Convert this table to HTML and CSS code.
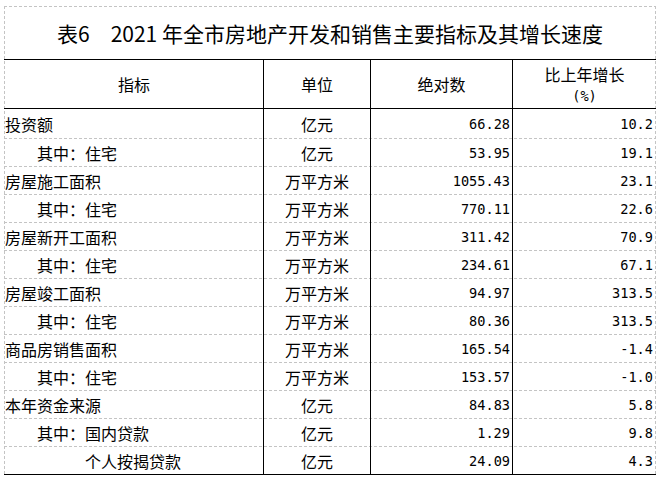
FILE: index.html
```html
<!DOCTYPE html>
<html lang="zh-CN">
<head>
<meta charset="utf-8">
<title>表6 2021年全市房地产开发和销售主要指标及其增长速度</title>
<link rel="stylesheet" href="styles.css">
</head>
<body>
<div class="sheet">
  <div class="title">表6　2021 年全市房地产开发和销售主要指标及其增长速度</div>
  <div class="row head">
    <div class="c c1 center">指标</div>
    <div class="c c2">单位</div>
    <div class="c c3 center">绝对数</div>
    <div class="c c4 center stack"><span>比上年增长</span><span class="num">(%)</span></div>
  </div>
  <div class="row first">
    <div class="c c1">投资额</div><div class="c c2">亿元</div><div class="c c3 num">66.28</div><div class="c c4 num">10.2</div>
  </div>
  <div class="row">
    <div class="c c1 ind1">其中：住宅</div><div class="c c2">亿元</div><div class="c c3 num">53.95</div><div class="c c4 num">19.1</div>
  </div>
  <div class="row">
    <div class="c c1">房屋施工面积</div><div class="c c2">万平方米</div><div class="c c3 num">1055.43</div><div class="c c4 num">23.1</div>
  </div>
  <div class="row">
    <div class="c c1 ind1">其中：住宅</div><div class="c c2">万平方米</div><div class="c c3 num">770.11</div><div class="c c4 num">22.6</div>
  </div>
  <div class="row">
    <div class="c c1">房屋新开工面积</div><div class="c c2">万平方米</div><div class="c c3 num">311.42</div><div class="c c4 num">70.9</div>
  </div>
  <div class="row">
    <div class="c c1 ind1">其中：住宅</div><div class="c c2">万平方米</div><div class="c c3 num">234.61</div><div class="c c4 num">67.1</div>
  </div>
  <div class="row">
    <div class="c c1">房屋竣工面积</div><div class="c c2">万平方米</div><div class="c c3 num">94.97</div><div class="c c4 num">313.5</div>
  </div>
  <div class="row">
    <div class="c c1 ind1">其中：住宅</div><div class="c c2">万平方米</div><div class="c c3 num">80.36</div><div class="c c4 num">313.5</div>
  </div>
  <div class="row">
    <div class="c c1">商品房销售面积</div><div class="c c2">万平方米</div><div class="c c3 num">165.54</div><div class="c c4 num">-1.4</div>
  </div>
  <div class="row">
    <div class="c c1 ind1">其中：住宅</div><div class="c c2">万平方米</div><div class="c c3 num">153.57</div><div class="c c4 num">-1.0</div>
  </div>
  <div class="row">
    <div class="c c1">本年资金来源</div><div class="c c2">亿元</div><div class="c c3 num">84.83</div><div class="c c4 num">5.8</div>
  </div>
  <div class="row">
    <div class="c c1 ind1">其中：国内贷款</div><div class="c c2">亿元</div><div class="c c3 num">1.29</div><div class="c c4 num">9.8</div>
  </div>
  <div class="row last">
    <div class="c c1 ind2">个人按揭贷款</div><div class="c c2">亿元</div><div class="c c3 num">24.09</div><div class="c c4 num">4.3</div>
  </div>
</div>
</body>
</html>
```

FILE: styles.css
```css
* {
  box-sizing: border-box;
  margin: 0;
  padding: 0;
}

html, body {
  background: #ffffff;
}

body {
  margin: 0;
  font-family: "Noto Sans CJK SC", "Noto Sans", sans-serif;
  color: #000000;
}

.sheet {
  margin: 6px 0 0 4px;
  width: 652px;
  padding-top: 1px;
  background:
    repeating-linear-gradient(90deg, #c4c4c4 0 3px, transparent 3px 5px) left top / 100% 1px no-repeat,
    repeating-linear-gradient(180deg, #c4c4c4 0 3px, transparent 3px 5px) left top / 1px 100% no-repeat,
    repeating-linear-gradient(180deg, #c4c4c4 0 3px, transparent 3px 5px) right top / 1px 100% no-repeat;
}

.title {
  height: 53px;
  border-bottom: 1px solid #000000;
  display: flex;
  align-items: center;
  justify-content: center;
  font-size: 21px;
  font-weight: 400;
  padding-bottom: 1px;
  white-space: pre;
}

.row {
  display: grid;
  grid-template-columns: 260px 107px 142px 143px;
  height: 28px;
  font-size: 16px;
  background: repeating-linear-gradient(90deg, #c4c4c4 0 3px, transparent 3px 5px) left bottom / 100% 1px no-repeat;
}

.row.head {
  height: 49px;
  background: none;
  border-bottom: 1px solid #000000;
}

.row.first {
  height: 30px;
}

.row.last {
  background: none;
  border-bottom: 1px solid #000000;
}

.c {
  display: flex;
  align-items: center;
  white-space: nowrap;
  line-height: 20px;
}

.c1 {
  padding-left: 1px;
  border-right: 1px solid #000000;
}

.c2 {
  justify-content: center;
  border-right: 1px solid #000000;
}

.c3 {
  border-right: 1px solid #000000;
  justify-content: flex-end;
  padding-right: 2px;
}

.c4 {
  justify-content: flex-end;
  padding-right: 3px;
}

.center {
  justify-content: center;
  padding-right: 0;
}

.stack {
  flex-direction: column;
  line-height: 22px;
  padding-top: 1px;
}

.num {
  font-family: "DejaVu Sans Mono", "Liberation Mono", monospace;
  font-size: 13.6px;
}

.ind1 {
  padding-left: 33px;
}

.ind2 {
  padding-left: 81px;
}
```
